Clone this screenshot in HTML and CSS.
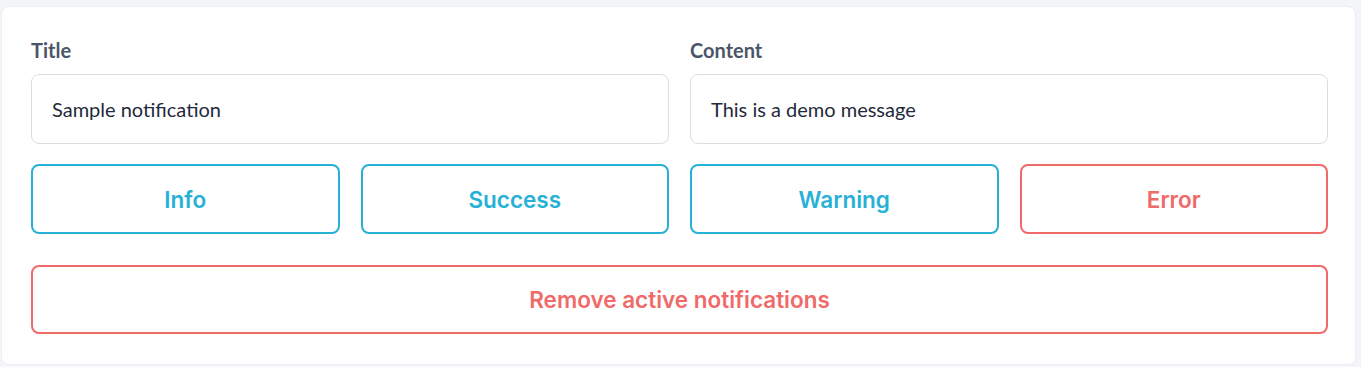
FILE: index.html
```html
<!DOCTYPE html>
<html>
<head>
<meta charset="utf-8">
<link rel="stylesheet" href="styles.css">
</head>
<body>
<div class="card">
  <div class="fields">
    <div class="field">
      <label class="label">Title</label>
      <input class="input" type="text" value="Sample notification">
    </div>
    <div class="field">
      <label class="label">Content</label>
      <input class="input" type="text" value="This is a demo message">
    </div>
  </div>
  <div class="buttons">
    <button class="btn btn-info">Info</button>
    <button class="btn btn-info">Success</button>
    <button class="btn btn-info">Warning</button>
    <button class="btn btn-error">Error</button>
  </div>
  <button class="btn btn-error btn-wide">Remove active notifications</button>
</div>
</body>
</html>
```
FILE: styles.css
```css
html, body {
  margin: 0;
  padding: 0;
  background: #f4f5f9;
}
body {
  padding: 6px 5px 0 1px;
  font-family: Lato, "Liberation Sans", sans-serif;
}
.card {
  background: #ffffff;
  border: 1px solid #eceef3;
  border-radius: 8px;
  padding: 31px 27px 30px 29px;
  width: 1297px;
}
.fields {
  display: grid;
  grid-template-columns: 1fr 1fr;
  column-gap: 21px;
}
.field {
  display: flex;
  flex-direction: column;
}
.label {
  font-family: Lato, sans-serif;
  font-weight: 700;
  font-size: 20px;
  line-height: 24px;
  color: #4b5568;
  margin-bottom: 12px;
}
.input {
  box-sizing: border-box;
  height: 70px;
  border: 1px solid #dcdde3;
  border-radius: 8px;
  padding: 0 20px;
  font-family: Lato, sans-serif;
  font-size: 20px;
  color: #1f2a3c;
  background: #fff;
  outline: none;
}
.buttons {
  display: grid;
  grid-template-columns: repeat(4, 1fr);
  column-gap: 21px;
  margin-top: 20px;
}
.btn {
  box-sizing: border-box;
  height: 70px;
  background: #fff;
  border-radius: 8px;
  font-family: Inter, sans-serif;
  font-weight: 600;
  font-size: 22.5px;
  cursor: pointer;
}
.btn-info {
  border: 2px solid #27b1d6;
  color: #27b1d6;
}
.btn-error {
  border: 2px solid #f06a6a;
  color: #f06a6a;
}
.btn-wide {
  display: block;
  width: 100%;
  height: 69px;
  margin-top: 31px;
}
```
